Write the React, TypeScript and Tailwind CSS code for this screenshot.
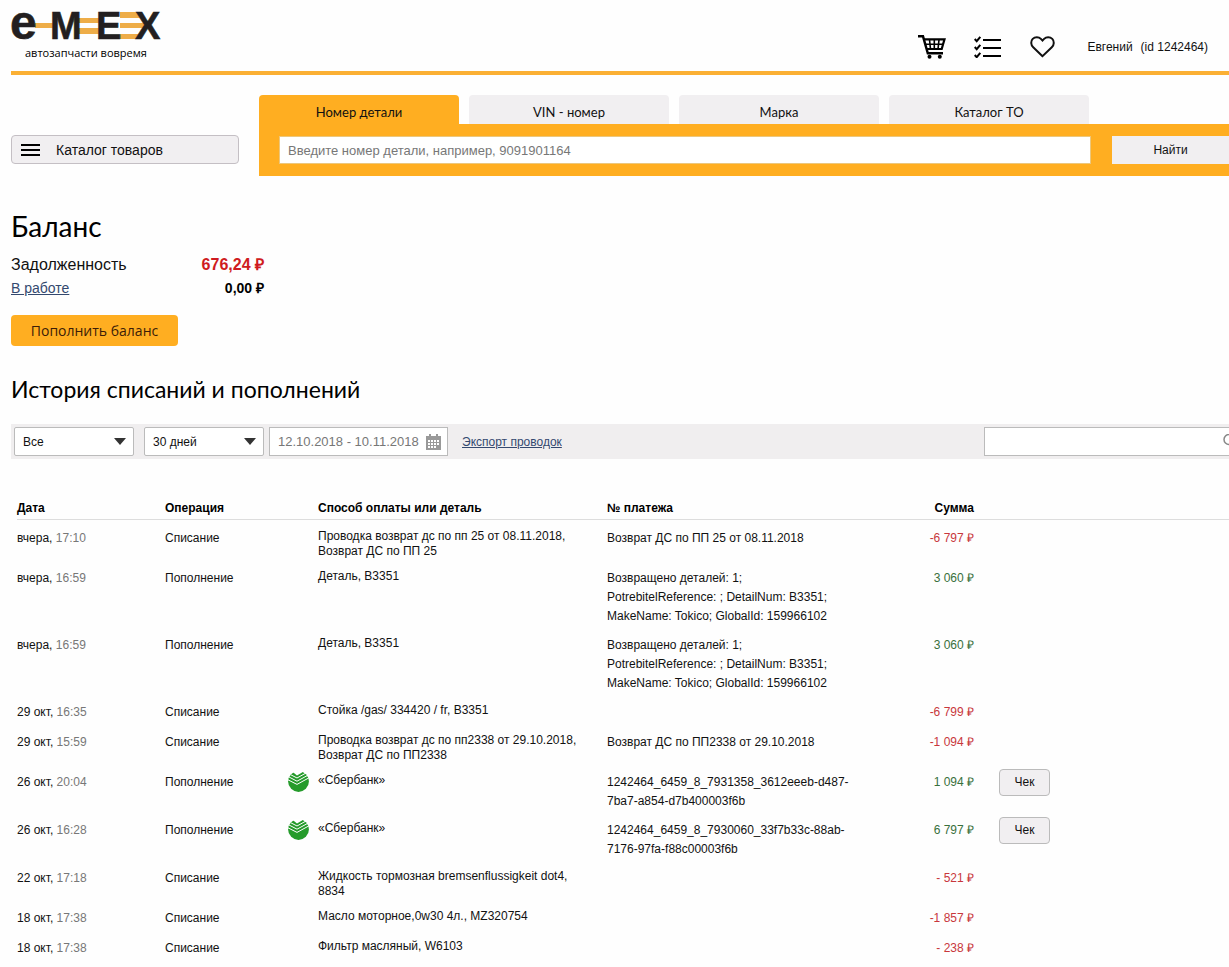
import React, { useState } from "react";

type Entry = {
  day: string;
  time: string;
  operation: string;
  method: string[];
  payment: string[];
  sum: string;
  bank?: boolean;
};

const entries: Entry[] = [
  {
    day: "вчера",
    time: "17:10",
    operation: "Списание",
    method: ["Проводка возврат дс по пп 25 от 08.11.2018,", "Возврат ДС по ПП 25"],
    payment: ["Возврат ДС по ПП 25 от 08.11.2018"],
    sum: "-6 797",
  },
  {
    day: "вчера",
    time: "16:59",
    operation: "Пополнение",
    method: ["Деталь, B3351"],
    payment: [
      "Возвращено деталей: 1;",
      "PotrebitelReference: ; DetailNum: B3351;",
      "MakeName: Tokico; GlobalId: 159966102",
    ],
    sum: "3 060",
  },
  {
    day: "вчера",
    time: "16:59",
    operation: "Пополнение",
    method: ["Деталь, B3351"],
    payment: [
      "Возвращено деталей: 1;",
      "PotrebitelReference: ; DetailNum: B3351;",
      "MakeName: Tokico; GlobalId: 159966102",
    ],
    sum: "3 060",
  },
  {
    day: "29 окт",
    time: "16:35",
    operation: "Списание",
    method: ["Стойка /gas/ 334420 / fr, B3351"],
    payment: [],
    sum: "-6 799",
  },
  {
    day: "29 окт",
    time: "15:59",
    operation: "Списание",
    method: ["Проводка возврат дс по пп2338 от 29.10.2018,", "Возврат ДС по ПП2338"],
    payment: ["Возврат ДС по ПП2338 от 29.10.2018"],
    sum: "-1 094",
  },
  {
    day: "26 окт",
    time: "20:04",
    operation: "Пополнение",
    method: ["«Сбербанк»"],
    payment: ["1242464_6459_8_7931358_3612eeeb-d487-", "7ba7-a854-d7b400003f6b"],
    sum: "1 094",
    bank: true,
  },
  {
    day: "26 окт",
    time: "16:28",
    operation: "Пополнение",
    method: ["«Сбербанк»"],
    payment: ["1242464_6459_8_7930060_33f7b33c-88ab-", "7176-97fa-f88c00003f6b"],
    sum: "6 797",
    bank: true,
  },
  {
    day: "22 окт",
    time: "17:18",
    operation: "Списание",
    method: ["Жидкость тормозная bremsenflussigkeit dot4,", "8834"],
    payment: [],
    sum: "- 521",
  },
  {
    day: "18 окт",
    time: "17:38",
    operation: "Списание",
    method: ["Масло моторное,0w30 4л., MZ320754"],
    payment: [],
    sum: "-1 857",
  },
  {
    day: "18 окт",
    time: "17:38",
    operation: "Списание",
    method: ["Фильтр масляный, W6103"],
    payment: [],
    sum: "- 238",
  },
];

const tabs = ["Номер детали", "VIN - номер", "Марка", "Каталог ТО"];

function Logo() {
  return (
    <svg
      width="150"
      height="32"
      viewBox="0 0 150 32"
      role="img"
      aria-label="emex"
      className="overflow-visible"
    >
      <g fill="#eead48">
        <path d="M24 12h19v5H24z" />
        <path d="M66 7h23v5H66zM66 17h23v6H66z" />
        <path d="M109 1h16l4 6h-20zM109 12h25v5h-25zM109 23h19l-4 5h-15z" />
      </g>
      <g
        fill="#231f20"
        stroke="#231f20"
        strokeWidth="0.600"
        fontFamily="Liberation Sans, Arial, sans-serif"
        fontWeight="700"
      >
        <text x="-1" y="28" fontSize="48">e</text>
        <text x="39" y="28" fontSize="38">M</text>
        <text x="85" y="28" fontSize="38">E</text>
        <text x="124" y="28" fontSize="38">X</text>
      </g>
    </svg>
  );
}

function CartIcon() {
  return (
    <svg width="28" height="24" viewBox="0 0 28 24" fill="none" stroke="#000" strokeWidth="2">
      <path d="M0 1.300h5L9.800 18.300H25" strokeWidth="2.400" />
      <path d="M6 4.300h20.500l-2.800 9.700H9" strokeWidth="2.200" />
      <path d="M7 9.200h18M11.500 4.600l1 9.600M16.300 4.600v9.600M21 4.600l-1 9.600" strokeWidth="1.600" />
      <circle cx="11.500" cy="21.800" r="2" fill="#000" stroke="none" />
      <circle cx="21.800" cy="21.800" r="2" fill="#000" stroke="none" />
    </svg>
  );
}

function ListIcon() {
  return (
    <svg width="27" height="22" viewBox="0 0 27 22" fill="none" stroke="#000" strokeWidth="2.200">
      <path d="M9 4h18M9 12h18M9 20h18" />
      <path d="M.7 3l2 2.200L6.300.8M.7 11l2 2.200 3.600-4.400M.7 19l2 2.200 3.600-4.400" strokeWidth="2" />
    </svg>
  );
}

function HeartIcon() {
  return (
    <svg width="25" height="22" viewBox="0 0 25 22" fill="none" stroke="#111" strokeWidth="2">
      <path d="M12.500 20.200L3.200 11.300C.7 8.800.6 5 2.700 2.900c2.300-2.300 6-2.300 8.200 0l1.600 1.700 1.600-1.700c2.200-2.300 5.900-2.300 8.200 0 2.100 2.100 2 5.900-.5 8.400z" />
    </svg>
  );
}

function CalendarIcon() {
  return (
    <svg width="15" height="16" viewBox="0 0 15 16" className="shrink-0">
      <path fill="#999" d="M0 2h15v14H0zM3 0h2v3H3zM10 0h2v3h-2z" />
      <path
        fill="#fff"
        d="M2 6h2v2H2zM5 6h2v2H5zM8 6h2v2H8zM11 6h2v2h-2zM2 9h2v2H2zM5 9h2v2H5zM8 9h2v2H8zM11 9h2v2h-2zM2 12h2v2H2zM5 12h2v2H5zM8 12h2v2H8z"
      />
    </svg>
  );
}

function BankIcon() {
  return (
    <svg width="21" height="21" viewBox="0 0 21 21" className="-my-0.5 block">
      <circle cx="10.500" cy="10.500" r="10.400" fill="#259b2b" />
      <path d="M3.500 0h13L9 4.600z" fill="#fff" />
      <path
        d="M2.500 3.600L9 7l9-5M1 6l8 4.200L20 4.200M0 8.800l9 4.600 12-6.600"
        fill="none"
        stroke="#fff"
        strokeWidth="1"
      />
    </svg>
  );
}

function Filter({ label, options, width }: { label: string; options: string[]; width: string }) {
  return (
    <div className={`relative ${width}`}>
      <select
        aria-label={label}
        className="block h-[29px] w-full appearance-none rounded-xs border border-[#bbb] bg-white pl-2 text-xs"
      >
        {options.map((option) => (
          <option key={option}>{option}</option>
        ))}
      </select>
      <svg
        width="12"
        height="7"
        viewBox="0 0 12 7"
        className="pointer-events-none absolute top-[11px] right-2"
      >
        <path d="M0 0h12L6 7z" fill="#333" />
      </svg>
    </div>
  );
}

export default function App() {
  const [activeTab, setActiveTab] = useState(0);
  const [period, setPeriod] = useState("12.10.2018 - 10.11.2018");

  return (
    <div className="min-h-screen overflow-x-hidden bg-[#fefefe] pl-[11px] font-['Liberation_Sans',Arial,sans-serif] text-xs text-[#111]">
      <header className="flex h-[75px] items-start justify-between border-b-4 border-[#fbb034] pt-[11px] pr-[21px]">
        <a href="#" className="block">
          <Logo />
          <span className="block pl-[14px] font-['Open_Sans',sans-serif] text-[11px] leading-5 font-medium text-black">
            автозапчасти вовремя
          </span>
        </a>
        <nav className="flex items-center pt-6">
          <a href="#" aria-label="Корзина" className="mr-7">
            <CartIcon />
          </a>
          <a href="#" aria-label="Списки" className="mr-[29px]">
            <ListIcon />
          </a>
          <a href="#" aria-label="Избранное" className="mr-8">
            <HeartIcon />
          </a>
          <a href="#" className="flex gap-2">
            <span>Евгений</span>
            <span>(id 1242464)</span>
          </a>
        </nav>
      </header>

      <section className="flex items-start pt-5">
        <button className="mt-10 mr-5 flex h-[29px] w-[228px] shrink-0 items-center gap-4 rounded border border-[#c4bfc4] bg-[#f1eff1] pl-[9px] text-sm">
          <svg width="19" height="12" viewBox="0 0 19 12">
            <path d="M0 0h19v2H0zM0 5h19v2H0zM0 10h19v2H0z" />
          </svg>
          Каталог товаров
        </button>
        <div className="flex-1">
          <div className="flex gap-[10px] font-['Lato','Open_Sans',sans-serif] text-[13px]">
            {tabs.map((tab, i) => (
              <button
                key={tab}
                onClick={() => setActiveTab(i)}
                className={`h-[29px] w-[200px] rounded-t pt-[6px] ${
                  i === activeTab ? "bg-[#ffae21]" : "bg-[#f1eff1]"
                }`}
              >
                {tab}
              </button>
            ))}
          </div>
          <form
            className="flex gap-[21px] bg-[#ffae21] py-3 pl-5"
            onSubmit={(e) => e.preventDefault()}
          >
            <input
              aria-label="Номер детали"
              placeholder="Введите номер детали, например, 9091901164"
              className="h-7 flex-1 border border-[#ecc77d] bg-white px-2 text-[13px] placeholder:text-[#777]"
            />
            <button className="h-7 w-[117px] bg-[#f1eff1] text-xs">Найти</button>
          </form>
        </div>
      </section>

      <section className="pt-8">
        <h1 className="font-['Lato','Open_Sans',sans-serif] text-[28px] leading-9 text-black">
          Баланс
        </h1>
        <dl className="w-[253px] pt-[9px]">
          <div className="flex justify-between text-base leading-6">
            <dt>Задолженность</dt>
            <dd className="font-bold text-[#cf1b20]">676,24 ₽</dd>
          </div>
          <div className="flex justify-between text-sm leading-[22px]">
            <dt>
              <a href="#" className="text-[#34496f] underline">
                В работе
              </a>
            </dt>
            <dd className="font-bold text-black">0,00 ₽</dd>
          </div>
        </dl>
        <button className="mt-4 h-[31px] w-[167px] rounded-sm bg-[#ffae21] font-['Open_Sans',sans-serif] text-sm text-[#3c1d08]">
          Пополнить баланс
        </button>
      </section>

      <section className="pt-[27px]">
        <h2 className="font-['Lato','Open_Sans',sans-serif] text-[23px] leading-8 text-black">
          История списаний и пополнений
        </h2>
        <div className="mt-[19px] flex h-[35px] items-center bg-[#f0eeef] pl-[3px]">
          <Filter label="Операция" options={["Все", "Списание", "Пополнение"]} width="mr-[10px] w-[120px]" />
          <Filter label="Период" options={["30 дней", "60 дней", "90 дней"]} width="mr-[5px] w-[120px]" />
          <label className="mr-[14px] flex h-[29px] w-[179px] items-center border border-[#bbb] bg-white pr-[6px] pl-2">
            <input
              aria-label="Даты"
              value={period}
              onChange={(e) => setPeriod(e.target.value)}
              className="min-w-0 flex-1 text-[13px] text-[#777]"
            />
            <CalendarIcon />
          </label>
          <a href="#" className="text-[#34496f] underline">
            Экспорт проводок
          </a>
          <label className="-mr-3 ml-auto flex h-[29px] w-[257px] items-center border border-[#bbb] bg-white pr-[3px]">
            <input aria-label="Поиск" className="min-w-0 flex-1 pl-2" />
            <svg width="15" height="15" viewBox="0 0 15 15" fill="none" stroke="#888" strokeWidth="1.500">
              <circle cx="7" cy="5.500" r="5" />
              <path d="M10.500 9l4 4" />
            </svg>
          </label>
        </div>

        <div className="pt-[38px] pl-[6px]">
          <table className="w-full table-fixed">
            <colgroup>
              <col className="w-[148px]" />
              <col className="w-[123px]" />
              <col className="w-[30px]" />
              <col className="w-[289px]" />
              <col className="w-[250px]" />
              <col className="w-[117px]" />
              <col />
            </colgroup>
            <thead>
              <tr className="border-b border-[#ddd] text-left text-black">
                <th className="h-[22px]">Дата</th>
                <th>Операция</th>
                <td />
                <th>Способ оплаты или деталь</th>
                <th>№ платежа</th>
                <th className="text-right">Сумма</th>
                <td />
              </tr>
            </thead>
            <tbody>
              {entries.map((entry, i) => (
                <tr key={i} className="align-top leading-[19px] *:pt-[9px] *:pb-px">
                  <td className="h-[30px]">
                    {entry.day}, <span className="text-[#777]">{entry.time}</span>
                  </td>
                  <td>{entry.operation}</td>
                  <td>{entry.bank && <BankIcon />}</td>
                  <td className="leading-[15px]">
                    {entry.method.map((line) => (
                      <div key={line}>{line}</div>
                    ))}
                  </td>
                  <td>
                    {entry.payment.map((line) => (
                      <div key={line}>{line}</div>
                    ))}
                  </td>
                  <td
                    className={`text-right ${
                      entry.sum.startsWith("-") ? "text-[#c8373c]" : "text-[#39703c]"
                    }`}
                  >
                    {entry.sum} ₽
                  </td>
                  <td className="pl-[25px]">
                    {entry.bank && (
                      <button className="-my-1 block h-[27px] w-[51px] rounded-sm border border-[#bbb] bg-[#f1eff1]">
                        Чек
                      </button>
                    )}
                  </td>
                </tr>
              ))}
            </tbody>
          </table>
        </div>
      </section>
    </div>
  );
}
